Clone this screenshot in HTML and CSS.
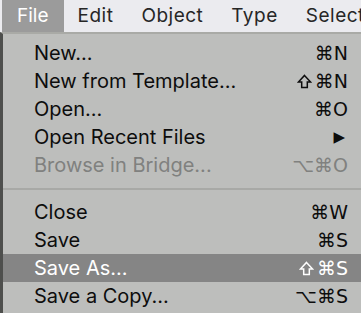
FILE: index.html
```html
<!DOCTYPE html>
<html lang="en">
<head>
    <meta charset="UTF-8">
    <title>File Menu</title>
    <link rel="stylesheet" href="styles.css">
</head>
<body>
    <div class="menubar">
        <span class="menu-title active">File</span>
        <span class="menu-title">Edit</span>
        <span class="menu-title">Object</span>
        <span class="menu-title">Type</span>
        <span class="menu-title">Select</span>
    </div>

    <div class="dropdown">
        <div class="item"><span>New...</span><span class="key">⌘N</span></div>
        <div class="item">
            <span>New from Template...</span>
            <span class="key">
                <svg class="shift" viewBox="0 0 16 16"><path d="M8 1.5 L14.5 8.5 H11 V14.5 H5 V8.5 H1.5 Z"/></svg>⌘N
            </span>
        </div>
        <div class="item"><span>Open...</span><span class="key">⌘O</span></div>
        <div class="item"><span>Open Recent Files</span><span class="key arrow">▶</span></div>
        <div class="item disabled"><span>Browse in Bridge...</span><span class="key">⌥⌘O</span></div>
        <div class="separator"></div>
        <div class="item"><span>Close</span><span class="key">⌘W</span></div>
        <div class="item"><span>Save</span><span class="key">⌘S</span></div>
        <div class="item selected">
            <span>Save As...</span>
            <span class="key">
                <svg class="shift" viewBox="0 0 16 16"><path d="M8 1.5 L14.5 8.5 H11 V14.5 H5 V8.5 H1.5 Z"/></svg>⌘S
            </span>
        </div>
        <div class="item"><span>Save a Copy...</span><span class="key">⌥⌘S</span></div>
    </div>
</body>
</html>
```

FILE: styles.css
```css
/* General Styles */
body {
    margin: 0;
    width: 361px;
    height: 313px;
    overflow: hidden;
    font-family: Inter, "Liberation Sans", Arial, sans-serif;
    background-color: #bdbebc;
}

/* Top menu bar */
.menubar {
    display: flex;
    height: 32px;
    background-color: #ebebef;
    white-space: nowrap;
    overflow: hidden;
}

.menu-title {
    font-size: 19px;
    line-height: 32px;
    letter-spacing: 0.5px;
    color: #262626;
    padding: 0 14px 0 14px;
}

.menu-title.active {
    background-color: #9b9b9b;
    color: #ffffff;
    letter-spacing: 0;
    margin-left: 2px;
    padding: 0 15px 0 15px;
}

/* Dropdown */
.dropdown {
    border-left: 3px solid #4e4f4d;
    border-top: 2px solid #a9aaa6;
    background-color: #bdbebc;
    padding-top: 5px;
    height: 274px;
}

.item {
    display: flex;
    justify-content: space-between;
    align-items: center;
    height: 28px;
    padding: 0 13px 0 31px;
    font-size: 20px;
    color: #0d0d0d;
}

.item.disabled {
    color: #80817f;
}

.item.selected {
    background-color: #858585;
    color: #ffffff;
}

.key {
    display: flex;
    align-items: center;
    font-family: "DejaVu Sans", sans-serif;
    font-size: 19px;
}

.shift {
    width: 15px;
    height: 15px;
    margin-right: 3px;
    fill: none;
    stroke: currentColor;
    stroke-width: 1.6;
    stroke-linejoin: miter;
}

.arrow {
    font-size: 15px;
    padding-right: 3px;
}

.separator {
    height: 2px;
    background-color: #a8a9a6;
    margin: 9px 0 8px 0;
}
```
